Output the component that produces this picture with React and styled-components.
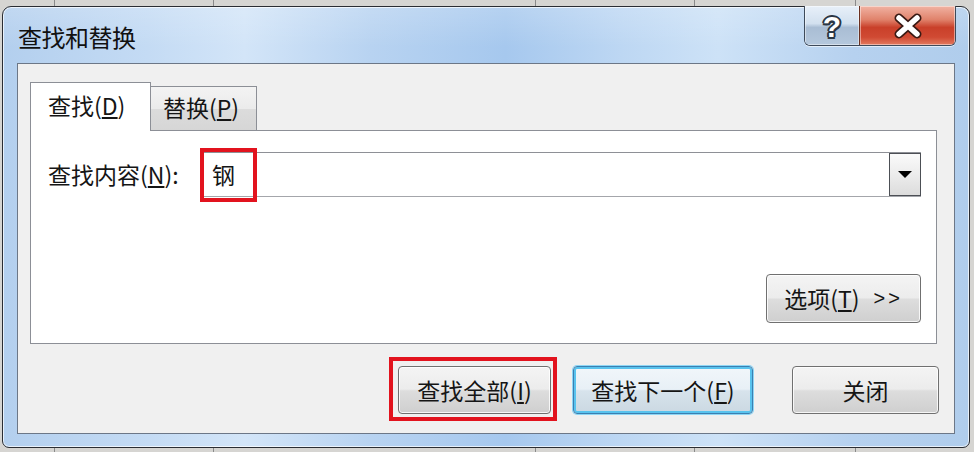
import React from 'react';
import styled, { createGlobalStyle, css } from 'styled-components';

const GlobalStyle = createGlobalStyle`
  html, body {
    margin: 0;
    padding: 0;
    background: #c9c9c7;
  }
  body {
    font-family: "Noto Sans CJK SC", "Noto Sans", sans-serif;
    color: #151515;
  }
`;

const CJK = `"Noto Sans CJK SC", "Noto Sans", sans-serif`;

const Desk = styled.div`
  width: 974px;
  height: 452px;
  box-sizing: border-box;
  padding: 6px 5px 0 2px;
  background:
    linear-gradient(90deg, transparent 54px, #8a8a8a 54px, #8a8a8a 55px, transparent 55px),
    linear-gradient(90deg, transparent 213px, #8a8a8a 213px, #8a8a8a 214px, transparent 214px),
    linear-gradient(90deg, transparent 535px, #8a8a8a 535px, #8a8a8a 536px, transparent 536px),
    linear-gradient(90deg, transparent 694px, #8a8a8a 694px, #8a8a8a 695px, transparent 695px),
    linear-gradient(90deg, transparent 855px, #8a8a8a 855px, #8a8a8a 856px, transparent 856px),
    #d6d5d2;
`;

const Window = styled.div`
  width: 968px;
  height: 442px;
  box-sizing: border-box;
  border: 1px solid #2a2d33;
  border-radius: 9px 9px 7px 7px;
  background:
    linear-gradient(180deg, rgba(255,255,255,0.18) 0px, rgba(255,255,255,0) 40px),
    linear-gradient(90deg, #b3cfee 0%, #c4dbf4 15%, #d3e5f8 25%, #b8d3f1 38%, #a6c8ee 52%, #bdd7f3 64%, #cde2f7 74%, #b6d1ef 88%, #b0cdec 100%);
  box-shadow: inset 0 0 0 1px rgba(255,255,255,0.7);
  display: flex;
  flex-direction: column;
  padding: 0 13px 12px 14px;
`;

const TitleBar = styled.div`
  height: 56px;
  display: flex;
  align-items: flex-start;
  justify-content: space-between;
`;

const Title = styled.div`
  margin: 18px 0 0 1px;
  font-family: ${CJK};
  font-size: 24px;
  line-height: 24px;
  color: #111;
  letter-spacing: -0.5px;
`;

const CaptionGroup = styled.div`
  display: flex;
  margin-top: -1px;
  height: 39px;
  border: 1px solid #3e4a5a;
  border-top: none;
  border-radius: 0 0 6px 6px;
  overflow: hidden;
  box-shadow: 0 1px 0 rgba(255,255,255,0.6);
`;

const CaptionButton = styled.div`
  display: flex;
  align-items: center;
  justify-content: center;
  height: 100%;
  box-shadow: inset 0 0 0 1px rgba(255,255,255,0.45);
  ${p => p.$close ? css`
    width: 95px;
    background: linear-gradient(180deg, #f1b3a3 0%, #e0826b 35%, #c9402a 55%, #d04a33 80%, #e27a60 100%);
    border-left: 1px solid #6a3020;
  ` : css`
    width: 54px;
    background: linear-gradient(180deg, #e8f0f9 0%, #d2e0ef 45%, #a9bdd4 55%, #b5c8dd 100%);
  `}
`;

const HelpGlyph = styled.span`
  font-family: "Liberation Sans", sans-serif;
  font-weight: bold;
  font-size: 30px;
  line-height: 30px;
  margin-top: 2px;
  color: #fff;
  text-shadow:
    -2px 0 #2b3644, 2px 0 #2b3644, 0 -2px #2b3644, 0 2px #2b3644,
    -1.5px -1.5px #2b3644, 1.5px 1.5px #2b3644, -1.5px 1.5px #2b3644, 1.5px -1.5px #2b3644;
`;

const Client = styled.div`
  width: 938px;
  height: 371px;
  box-sizing: border-box;
  border: 1px solid #6c7787;
  background: #f0f0f0;
  display: flex;
  flex-direction: column;
  padding: 18px 15px 0 12px;
`;

const TabStrip = styled.div`
  display: flex;
  align-items: flex-end;
  height: 48px;
  position: relative;
  z-index: 1;
`;

const Tab = styled.div`
  box-sizing: border-box;
  display: flex;
  align-items: center;
  font-family: ${CJK};
  font-size: 23px;
  line-height: 23px;
  border: 1px solid #8c8f96;
  ${p => p.$active ? css`
    width: 121px;
    height: 49px;
    margin-bottom: -1px;
    padding: 0 0 4px 17px;
    background: #fff;
    border-bottom: none;
  ` : css`
    width: 106px;
    height: 44px;
    padding: 0 0 2px 12px;
    border-left: none;
    border-bottom: none;
    background: linear-gradient(180deg, #f3f3f3 0%, #ebebeb 50%, #dcdcdc 51%, #d6d6d6 100%);
  `}
`;

const Panel = styled.div`
  width: 907px;
  height: 214px;
  box-sizing: border-box;
  border: 1px solid #8c8f96;
  background: #fff;
  display: flex;
  flex-direction: column;
  padding: 21px 15px 20px 17px;
`;

const FindRow = styled.div`
  display: flex;
  align-items: center;
`;

const Label = styled.label`
  font-family: ${CJK};
  font-size: 23px;
  line-height: 23px;
  width: 152px;
  white-space: nowrap;
`;

const Combo = styled.div`
  position: relative;
  flex: 1;
  height: 45px;
  box-sizing: border-box;
  border: 1px solid #a4a6ab;
  border-top-color: #8e9096;
  display: flex;
  align-items: center;
  background: #fff;
`;

const ComboText = styled.span`
  flex: 1;
  padding-left: 11px;
  font-family: ${CJK};
  font-size: 23px;
  line-height: 23px;
`;

const DropButton = styled.div`
  width: 32px;
  height: 43px;
  box-sizing: border-box;
  border: 1px solid #4c4f55;
  background: linear-gradient(180deg, #fafafa 0%, #ececec 50%, #dcdcdc 100%);
  display: flex;
  align-items: center;
  justify-content: center;
  margin-right: -1px;
`;

const Triangle = styled.div`
  width: 0;
  height: 0;
  border-left: 7px solid transparent;
  border-right: 7px solid transparent;
  border-top: 7px solid #000;
`;

const Highlight = styled.div`
  position: absolute;
  box-sizing: border-box;
  border: 4px solid #e2131e;
  pointer-events: none;
  ${p => p.$inset}
`;

const OptionsRow = styled.div`
  margin-top: auto;
  display: flex;
  justify-content: flex-end;
`;

const Footer = styled.div`
  display: flex;
  justify-content: flex-end;
  margin-top: 22px;
`;

const Button = styled.div`
  position: relative;
  box-sizing: border-box;
  width: ${p => p.$w}px;
  height: ${p => p.$h || 48}px;
  margin-left: ${p => p.$ml || 0}px;
  display: flex;
  align-items: center;
  justify-content: center;
  font-family: ${CJK};
  font-size: 23px;
  line-height: 23px;
  border: 1px solid #707070;
  border-radius: 4px;
  background: linear-gradient(180deg, #f4f4f4 0%, #ececec 48%, #dddddd 52%, #cfcfcf 100%);
  box-shadow: inset 0 0 0 1px rgba(255,255,255,0.8);
  ${p => p.$focused && css`
    border: 1px solid #3c7fb1;
    background: linear-gradient(180deg, #f1f6fa 0%, #e8f0f6 48%, #d7e3ec 52%, #cbd8e2 100%);
    box-shadow: inset 0 0 0 2px #58c3ee, 0 0 0 1px #8dd6f5;
  `}
`;

const Arrows = styled.span`
  margin-left: 14px;
  font-family: "Liberation Sans", sans-serif;
  font-size: 20px;
  letter-spacing: 3px;
`;

const Key = ({ children }) => <>(<u>{children}</u>)</>;

const CloseIcon = () => (
  <svg width="34" height="26" viewBox="0 0 34 26">
    <path d="M8 5 L26 21 M26 5 L8 21" stroke="#3a1a14" strokeWidth="9" strokeLinecap="round" />
    <path d="M8 5 L26 21 M26 5 L8 21" stroke="#fff" strokeWidth="5.5" strokeLinecap="round" />
  </svg>
);

const App = () => {
  return (
    <Desk>
      <GlobalStyle />
      <Window>
        <TitleBar>
          <Title>查找和替换</Title>
          <CaptionGroup>
            <CaptionButton>
              <HelpGlyph>?</HelpGlyph>
            </CaptionButton>
            <CaptionButton $close>
              <CloseIcon />
            </CaptionButton>
          </CaptionGroup>
        </TitleBar>
        <Client>
          <TabStrip>
            <Tab $active>查找<Key>D</Key></Tab>
            <Tab>替换<Key>P</Key></Tab>
          </TabStrip>
          <Panel>
            <FindRow>
              <Label>查找内容<Key>N</Key>:</Label>
              <Combo>
                <ComboText>钢</ComboText>
                <DropButton>
                  <Triangle />
                </DropButton>
                <Highlight $inset="left: -1px; top: -5px; width: 57px; height: 54px;" />
              </Combo>
            </FindRow>
            <OptionsRow>
              <Button $w={155} $h={49}>
                选项<Key>T</Key>
                <Arrows>&gt;&gt;</Arrows>
              </Button>
            </OptionsRow>
          </Panel>
          <Footer>
            <Button $w={153}>
              查找全部<Key>I</Key>
              <Highlight $inset="left: -10px; top: -10px; right: -7px; bottom: -8px;" />
            </Button>
            <Button $w={180} $ml={22} $focused>
              查找下一个<Key>F</Key>
            </Button>
            <Button $w={147} $ml={39}>
              关闭
            </Button>
          </Footer>
        </Client>
      </Window>
    </Desk>
  );
};

export default App;
